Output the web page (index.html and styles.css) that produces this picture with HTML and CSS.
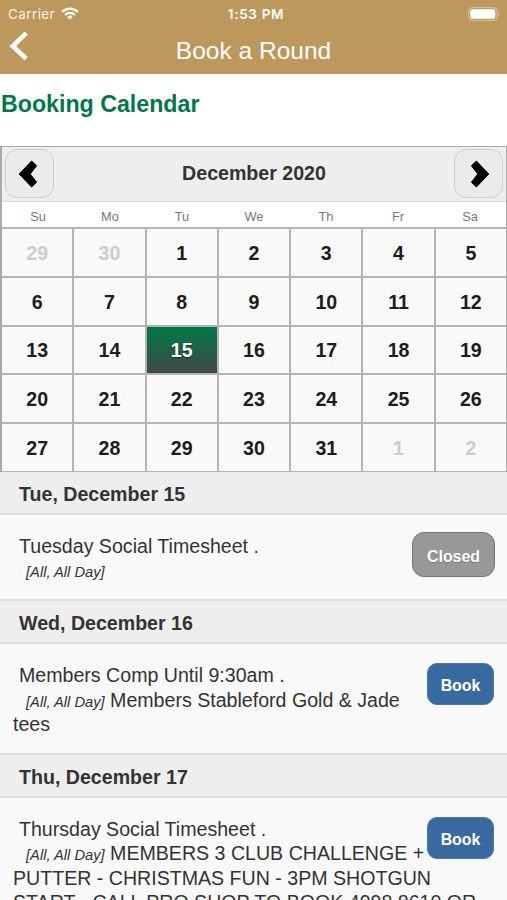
FILE: index.html
```html
<!DOCTYPE html>
<html lang="en">
  <head>
    <meta charset="UTF-8" />
    <meta name="viewport" content="width=device-width, initial-scale=1.0" />
    <title>Book a Round</title>
    <link rel="stylesheet" href="styles.css">
  </head>
  <body>
    <header class="header">
      <div class="status-bar">
        <div class="carrier">
          Carrier
          <svg class="wifi" width="18" height="13" viewBox="0 0 18 13" fill="none" stroke="#fff" stroke-width="2.2">
            <path d="M1.2 4.9a11 11 0 0 1 15.6 0" />
            <path d="M4 7.9a7 7 0 0 1 10 0" />
            <path d="M9 12.6l-2.7-2.8a3.8 3.8 0 0 1 5.4 0z" fill="#fff" stroke="none" />
          </svg>
        </div>
        <div class="time">1:53 PM</div>
        <svg class="battery" width="33" height="14" viewBox="0 0 33 14">
          <rect x="0.6" y="0.6" width="28.6" height="12.8" rx="3.6" fill="none" stroke="#fff" stroke-opacity="0.45" />
          <rect x="2.3" y="2.3" width="25" height="9.4" rx="2" fill="#fff" />
          <path d="M30.6 5v4.2c1.3-.5 1.3-3.7 0-4.2z" fill="#fff" fill-opacity="0.5" />
        </svg>
      </div>
      <div class="nav-bar">
        <a class="back" href="#" aria-label="Back">
          <svg width="20" height="30" viewBox="0 0 20 30" fill="none" stroke="#fff" stroke-width="4.6">
            <path d="M17.2 2.2L3.8 15.2l13.4 12.6" />
          </svg>
        </a>
        <div class="title">Book a Round</div>
      </div>
    </header>

    <h1>Booking Calendar</h1>

    <!-- Calendar -->
    <div class="calendar">
      <div class="month">
        <button type="button" class="month-btn prev" aria-label="Previous month">
          <svg width="20" height="28" viewBox="0 0 20 28" fill="#000" stroke="#000" stroke-linejoin="round">
            <path d="M1.2 14L13.6 1l5 4.8L12.2 14l6.4 8.2-5 4.8z" />
          </svg>
        </button>
        <h2>December 2020</h2>
        <button type="button" class="month-btn next" aria-label="Next month">
          <svg width="20" height="28" viewBox="0 0 20 28" fill="#000" stroke="#000" stroke-linejoin="round">
            <path d="M18.8 14L6.4 1l-5 4.8L7.8 14l-6.4 8.2 5 4.8z" />
          </svg>
        </button>
      </div>
      <div class="weekdays">
        <span>Su</span><span>Mo</span><span>Tu</span><span>We</span><span>Th</span><span>Fr</span><span>Sa</span>
      </div>
      <div class="days">
        <span class="other">29</span><span class="other">30</span><span>1</span><span>2</span><span>3</span><span>4</span><span>5</span>
        <span>6</span><span>7</span><span>8</span><span>9</span><span>10</span><span>11</span><span>12</span>
        <span>13</span><span>14</span><span class="selected">15</span><span>16</span><span>17</span><span>18</span><span>19</span>
        <span>20</span><span>21</span><span>22</span><span>23</span><span>24</span><span>25</span><span>26</span>
        <span>27</span><span>28</span><span>29</span><span>30</span><span>31</span><span class="other">1</span><span class="other">2</span>
      </div>
    </div>

    <!-- Events -->
    <div class="events">
      <h3>Tue, December 15</h3>
      <div class="event">
        <button type="button" class="btn closed">Closed</button>
        <div class="name">Tuesday Social Timesheet .</div>
        <div class="details"><em>[All, All Day]</em></div>
      </div>

      <h3>Wed, December 16</h3>
      <div class="event">
        <button type="button" class="btn">Book</button>
        <div class="name">Members Comp Until 9:30am .</div>
        <div class="details"><em>[All, All Day]</em> Members Stableford Gold &amp; Jade<br>tees</div>
      </div>

      <h3>Thu, December 17</h3>
      <div class="event">
        <button type="button" class="btn">Book</button>
        <div class="name">Thursday Social Timesheet .</div>
        <div class="details"><em>[All, All Day]</em> MEMBERS 3 CLUB CHALLENGE +<br>PUTTER - CHRISTMAS FUN - 3PM SHOTGUN<br>START - CALL PRO SHOP TO BOOK 4998 8610 OR</div>
      </div>
    </div>
  </body>
</html>
```

FILE: styles.css
```css
* {
  box-sizing: border-box;
}
body {
  margin: 0;
  height: 900px;
  overflow: hidden;
  background: #fff;
  color: #333;
  font-family: "Liberation Sans", Arial, sans-serif;
  font-size: 19.6px;
}
button {
  padding: 0;
  font-family: inherit;
  cursor: pointer;
}

/* Header */
.header {
  height: 74px;
  background: #bd985c;
  color: #fff;
}
.status-bar {
  display: grid;
  grid-template-columns: 1fr auto 1fr;
  align-items: center;
  height: 27px;
  padding: 0 6px 0 8px;
  font-family: Inter, sans-serif;
  font-size: 13.5px;
}
.carrier {
  display: flex;
  align-items: center;
  gap: 6px;
  color: #fbf3e6;
  letter-spacing: 0.4px;
}
.time {
  padding-left: 3px;
  font-weight: 600;
  letter-spacing: 0.7px;
}
.battery {
  justify-self: end;
}
.nav-bar {
  display: grid;
  grid-template-columns: 40px 1fr 40px;
  height: 47px;
}
.back {
  padding: 4px 0 0 9px;
}
.back svg {
  display: block;
}
.title {
  font-size: 24.5px;
  line-height: 47px;
  text-align: center;
}
h1 {
  height: 72px;
  margin: 0;
  padding: 16px 0 0 1px;
  color: #007849;
  font-size: 23.2px;
  line-height: 28px;
}

/* Calendar */
.calendar {
  border: 1px solid #aaa;
  border-left-width: 2px;
  border-bottom: none;
}
.month {
  display: flex;
  justify-content: space-between;
  align-items: center;
  height: 55px;
  padding: 0 3px 1px;
  background: #eee;
  border-bottom: 1px solid #ddd;
}
.month h2 {
  margin: 0;
  font-size: 19.6px;
}
.month-btn {
  display: flex;
  justify-content: center;
  align-items: center;
  width: 49px;
  height: 49px;
  background: #ebebeb;
  border: 1px solid #ccc;
  border-radius: 12px;
}
.month-btn.prev {
  padding-right: 4px;
}
.month-btn.next {
  padding-left: 4px;
}
.weekdays {
  display: grid;
  grid-template-columns: repeat(7, 1fr);
  height: 25px;
  color: #777;
  font-size: 12.8px;
  line-height: 29px;
  text-align: center;
}
.days {
  display: grid;
  grid-template-columns: repeat(7, 1fr);
  grid-template-rows: repeat(5, 1fr);
  gap: 2px;
  height: 245px;
  padding: 2px 0 1px;
  background: #b4b4b4;
}
.days span {
  display: flex;
  justify-content: center;
  align-items: center;
  padding-top: 2px;
  background: #f9f9f9;
  color: #1c1c1c;
  font-weight: bold;
}
.days .other {
  color: #ccc;
}
.days .selected {
  background: linear-gradient(#007a45, #404848);
  color: #fff;
  text-shadow: 0 1px 1px #222;
}

/* Events */
.events h3 {
  height: 43px;
  margin: 0;
  padding-left: 19px;
  background: #eee;
  border-bottom: 2px solid #ddd;
  font-size: 19.6px;
  line-height: 45px;
}
.event {
  position: relative;
  padding: 19px 13px 16.5px;
  background: #f9f9f9;
  border-bottom: 2px solid #ddd;
  line-height: 24.4px;
}
.name {
  padding-left: 6px;
}
.details {
  white-space: nowrap;
}
.details em {
  margin-left: 13px;
  font-size: 14.7px;
  line-height: 1;
}
.btn {
  position: absolute;
  top: 19px;
  right: 13px;
  width: 67px;
  height: 42px;
  background: #38699f;
  border: 1px solid #4479b3;
  border-radius: 10px;
  color: #fff;
  font-size: 15.9px;
  font-weight: bold;
  line-height: 44px;
}
.btn.closed {
  top: 17px;
  right: 12px;
  width: 83px;
  height: 45px;
  background: #989898;
  border-color: #777;
  border-radius: 12px;
  line-height: 47px;
  text-shadow: 0 1px 1px #777;
}
```
